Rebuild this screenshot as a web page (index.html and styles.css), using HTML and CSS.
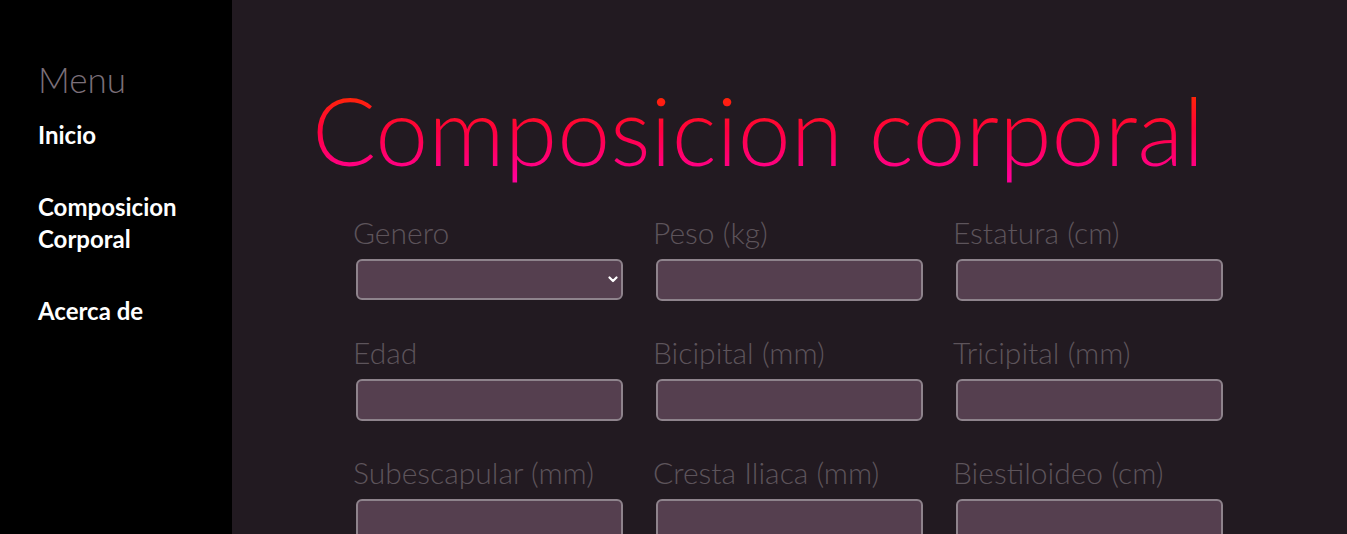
FILE: index.html
```html
<!DOCTYPE html>
<html lang="es">
<head>
<meta charset="utf-8">
<title>Composicion corporal</title>
<link rel="stylesheet" href="styles.css">
</head>
<body>
<div class="layout">
  <nav class="sidebar">
    <h2 class="menu-title">Menu</h2>
    <ul class="menu">
      <li><a href="#">Inicio</a></li>
      <li><a href="#">Composicion Corporal</a></li>
      <li><a href="#">Acerca de</a></li>
    </ul>
  </nav>
  <main class="content">
    <h1 class="title">Composicion corporal</h1>
    <form class="grid">
      <div class="field">
        <label>Genero</label>
        <div class="select-wrap">
          <select class="select"><option></option></select>
          <svg class="chev" width="10" height="7" viewBox="0 0 10 7"><path d="M1.5 1.5 L5 5 L8.5 1.5" fill="none" stroke="#fff" stroke-width="2.2" stroke-linecap="round" stroke-linejoin="round"/></svg>
        </div>
      </div>
      <div class="field"><label>Peso (kg)</label><input class="input" type="text"></div>
      <div class="field"><label>Estatura (cm)</label><input class="input" type="text"></div>
      <div class="field"><label>Edad</label><input class="input" type="text"></div>
      <div class="field"><label>Bicipital (mm)</label><input class="input" type="text"></div>
      <div class="field"><label>Tricipital (mm)</label><input class="input" type="text"></div>
      <div class="field"><label>Subescapular (mm)</label><input class="input" type="text"></div>
      <div class="field"><label>Cresta Iliaca (mm)</label><input class="input" type="text"></div>
      <div class="field"><label>Biestiloideo (cm)</label><input class="input" type="text"></div>
    </form>
  </main>
</div>
</body>
</html>
```
FILE: styles.css
```css
* { box-sizing: border-box; }
html, body { margin: 0; height: 100%; }
body {
  font-family: Lato, "Open Sans", sans-serif;
  background: #221a21;
  overflow: hidden;
}
.layout { display: flex; min-height: 100vh; }
.sidebar {
  width: 232px;
  flex: 0 0 232px;
  background: #000;
  padding: 59px 20px 0 38px;
}
.menu-title {
  margin: 0;
  font-weight: 300;
  font-size: 35px;
  line-height: 40px;
  color: #7b6f79;
}
.menu { list-style: none; margin: 20px 0 0 0; padding: 0; }
.menu li { margin-bottom: 40px; }
.menu a {
  color: #fff;
  text-decoration: none;
  font-weight: 700;
  font-size: 24px;
  line-height: 32px;
}
.content {
  flex: 1;
  padding: 0 0 0 80px;
}
.title {
  margin: 71px 0 0 0;
  font-weight: 300;
  font-size: 95px;
  line-height: 116px;
  display: inline-block;
  background: linear-gradient(180deg, #ff2a00 18%, #ff003c 50%, #ff0098 92%);
  -webkit-background-clip: text;
  background-clip: text;
  color: transparent;
}
.grid {
  display: grid;
  grid-template-columns: repeat(3, 300px);
  row-gap: 36px;
  margin: 30px 0 0 41px;
}
.field { display: flex; flex-direction: column; }
.field label {
  font-weight: 300;
  font-size: 30px;
  line-height: 30px;
  color: #5d545b;
}
.input, .select {
  margin: 12px 0 0 3px;
  width: 267px;
  height: 42px;
  background: #553f4f;
  border: 2px solid #8e838c;
  border-radius: 6px;
  outline: none;
  color: #fff;
  font-family: inherit;
}
.select-wrap { position: relative; width: 270px; }
.select {
  height: 41px;
  appearance: none;
  -webkit-appearance: none;
  display: block;
}
.chev { position: absolute; right: 5px; top: 29px; }
```
